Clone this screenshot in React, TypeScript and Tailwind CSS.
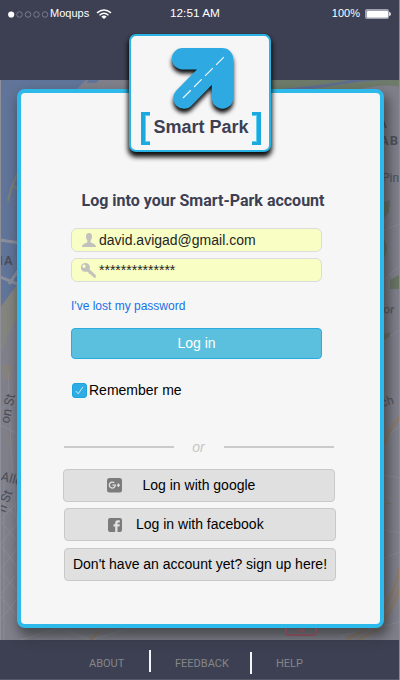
import React from "react";

const arial = "font-['Liberation_Sans',Arial,sans-serif]";
const roboto = "font-[Roboto,sans-serif]";

function MapBackdrop() {
  return (
    <svg className="absolute left-0 top-[80px] h-[560px] w-[400px]" viewBox="0 80 400 560">
      <rect x="0" y="80" width="400" height="560" fill="#7f808b" />
      <path d="M0 80H86L60 105L40 220L16 286L0 308Z" fill="#61759a" />
      <path d="M88 80h11l-3 3h-9z" fill="#61759a" />
      <path d="M200 80H400V87Q380 82 340 95H200Z" fill="#6e7b6a" />
      <path d="M270 94C320 90 345 81 386 80H350C330 85 300 87 270 90Z" fill="#5d6c91" />
      <path d="M8 201Q12 182 21 168M13 186l6 4" fill="none" stroke="#7d8178" strokeWidth="2" />
      <path d="M0 240L20 243M0 277L20 285M9 284L20 268" stroke="#8b8f9d" strokeWidth="3" fill="none" />
      <path d="M0 308L17 285V318L7 336L3 350H0Z" fill="#85857f" />
      <path d="M2 365h9v15h-8zM5 430q7 10 4 18" fill="#88827d" />
      <g fill="none" stroke="#8a8b96" strokeWidth="1">
        <path d="M0 410L20 395M8 370L11 450L18 540M0 425L20 435M0 500L20 520L0 545L20 570L0 595L20 620M20 500L0 520L20 545L0 570L20 595L0 620M4 480V640" />
        <path d="M384 230L400 224M384 280L400 265M384 340L400 330M384 440L400 425M384 475L400 478M384 530L400 533M384 558L400 552" />
        <path d="M20 640L60 628L90 640L130 628M340 636L400 622" />
      </g>
      <path d="M384 446Q388 429 400 417M384 609Q394 594 400 567M384 619Q394 608 400 587M346 640L368 628M358 640L380 628M90 640L98 632" fill="none" stroke="#8b7b6b" strokeWidth="3" />
      <path d="M384 202l6-2-1 12-5 6zM384 240q6 8 0 18zM390 280l9-5v14h-9zM384 334l6-2v5l-6 3z" fill="#687565" />
      <path d="M386 503l6 1" stroke="#69845f" strokeWidth="1" />
      <g className={roboto} fill="#4e4f59" fontSize="13">
        <text x="-1" y="265" fontWeight="700" letterSpacing="1">IA</text>
        <text x="372" y="128" fontWeight="700" fontSize="12">TA</text>
        <text x="380" y="145" fontWeight="700" fontSize="13" letterSpacing="1">AB</text>
        <text x="382" y="182" fontSize="12">Pin</text>
        <text x="383" y="313" fontSize="12" transform="rotate(5 383 313)">or</text>
        <text x="382" y="407" fontSize="12" transform="rotate(-15 382 407)">ch</text>
        <text x="9" y="424" transform="rotate(-78 9 424)">on St</text>
        <text x="0" y="480" transform="rotate(16 0 480)">Alle</text>
        <text x="5" y="513" transform="rotate(-70 5 513)">n St</text>
      </g>
    </svg>
  );
}

function Wifi() {
  return (
    <svg className="ml-[7px] h-[10px] w-4" viewBox="0 0 16 10" fill="none" stroke="#fff" strokeWidth="1.5">
      <path d="M1 3.9Q8-2 15 3.9M3.5 6.2Q8 2.4 12.5 6.2" />
      <path d="M5.3 7.7Q8 5.5 10.7 7.7L8 10Z" fill="#fff" stroke="none" />
    </svg>
  );
}

function StatusBar() {
  return (
    <header className="h-[80px] bg-[#3c4052] text-[11px] text-white">
      <div className="flex h-7 items-center pl-2 pr-[9px]">
        <div className="flex w-[162px] items-center">
          <svg className="h-[7px] w-[41px]" viewBox="0 0 41 7">
            <circle cx="3.2" cy="3.5" r="3.1" fill="#fff" />
            {[11.5, 20, 28.5, 37].map((x) => (
              <circle key={x} cx={x} cy="3.5" r="2.8" fill="none" stroke="#85869a" strokeWidth=".8" />
            ))}
          </svg>
          <span className="-mt-px ml-px">Moqups</span>
          <Wifi />
        </div>
        <span className="whitespace-nowrap text-[11.8px]">12:51 AM</span>
        <div className="flex flex-1 items-center justify-end">
          <span className="-mt-px">100%</span>
          <svg className="ml-[5px] h-[10px] w-[26px]" viewBox="0 0 26 10">
            <rect width="24" height="10" rx="2" fill="#a0a1ae" />
            <path d="M24 3q2 0 2 2t-2 2z" fill="#ddd" />
            <rect x="2" y="2" width="21" height="6.5" rx="1" fill="#fff" />
          </svg>
        </div>
      </div>
    </header>
  );
}

function Bracket({ flip }: { flip?: boolean }) {
  return (
    <svg className={flip ? "h-[33px] w-[9px] -scale-x-100" : "h-[33px] w-[9px]"} viewBox="0 0 9 33">
      <path d="M0 0H9V4H5V29H9V33H0Z" fill="#5fd0ee" />
      <path d="M0 0H9V3H4V30H9V33H0Z" fill="#1ba9df" />
    </svg>
  );
}

function LogoCard() {
  return (
    <div className="absolute left-[129px] top-[34px] h-[118px] w-[142px] rounded-[7px] border-2 border-[#29b2e2] bg-[#f6f6f6] shadow-[0_4px_5px_1px_rgba(0,0,0,0.95)]">
      <svg className="block h-[76px] w-full overflow-visible" viewBox="131 36 138 76">
        <g className="drop-shadow-[0px_4px_2px_rgba(0,0,0,0.95)]" fill="none" stroke="#2ea9e1" strokeWidth="21.4" strokeLinecap="round" strokeLinejoin="round">
          <path d="M182.5 58.8H222.5V98M184 98L222.5 58.8" />
          <path d="M205 72L222 62V80Z" fill="#2ea9e1" strokeWidth="2" />
        </g>
        <path d="M183 98L225 56" stroke="#f4fbff" strokeWidth="1.2" strokeDasharray="11 4.6" fill="none" />
      </svg>
      <div className="flex h-[33px] items-center justify-between pl-[10px] pr-[8px]">
        <Bracket />
        <span className="-mt-[3px] text-[18px] font-bold leading-none text-[#3c4052]">Smart Park</span>
        <Bracket flip />
      </div>
    </div>
  );
}

function UserIcon() {
  return (
    <svg className="h-[14px] w-[14px]" viewBox="0 0 14 14" fill="#c1c1bd">
      <path d="M7 0C4.7 0 3.8 1.7 4 4C4.1 5.8 4.9 7 5.4 7.8V9.2C4.5 10.3 0 10.4 0 14H14C14 10.4 9.5 10.3 8.6 9.2V7.8C9.1 7 9.9 5.8 10 4C10.2 1.7 9.3 0 7 0Z" />
    </svg>
  );
}

function KeyIcon() {
  return (
    <svg className="h-[15px] w-[15px]" viewBox="0 0 15 15">
      <path fillRule="evenodd" fill="#c1c1bd" d="M4.5 0A4.4 4.4 0 1 0 5.8 8.5L7.5 9.5L8.1 11L9.8 11.2L10.4 12.5L11.8 13.2L12.6 14.8H14.8V12.3L8.5 6.3A4.4 4.4 0 0 0 4.5 0ZM3.1 1.6A1.7 1.7 0 1 1 3 5A1.7 1.7 0 0 1 3.1 1.6Z" />
    </svg>
  );
}

function GoogleIcon() {
  return (
    <svg className="h-[15px] w-[15px]" viewBox="0 0 15 15" fill="none">
      <rect width="15" height="14.5" rx="2.5" fill="#7b7b7b" />
      <path d="M7.3 4.8A3 3 0 1 0 8.3 7.2H5.4M9.8 7.2H13.1M11.45 5.5V8.9" stroke="#e1e1e1" strokeWidth="1.3" />
    </svg>
  );
}

function FacebookIcon() {
  return (
    <svg className="h-[14px] w-[14px]" viewBox="0 0 14 14">
      <rect width="14" height="14" rx="2" fill="#7b7b7b" />
      <path d="M7.2 14V8.4H5.5V6.2H7.2V4.8Q7.2 2.2 9.8 2.2H11.8V4.4H10.3Q9.5 4.4 9.5 5.2V6.2H11.8L11.5 8.4H9.5V14Z" fill="#e1e1e1" />
    </svg>
  );
}

const providerButton = "flex h-[33px] w-[272px] items-center rounded border border-[#c9c9c9] bg-[#e0e0e0] text-[14px] text-black";
const field = "flex h-6 w-[251px] rounded-md border border-[#dcdcdc] bg-[#f8fec4] text-[14px] text-[#252525]";

function LoginCard() {
  return (
    <main className="relative ml-[17px] mt-[9px] h-[539px] w-[367px] rounded-lg border-4 border-[#2dbaea] bg-[#f6f6f6] pt-[97px] shadow-[3px_7px_12px_2px_rgba(40,40,40,0.6)]">
      <h1 className={`pl-[5px] text-center text-base font-bold leading-[22px] text-[#3c4052] ${roboto}`}>
        Log into your Smart-Park account
      </h1>
      <div className="ml-[50px] mt-4 flex flex-col items-start">
        <div className={`${field} items-center pl-[10px]`}>
          <UserIcon />
          <span className="ml-[3px]">david.avigad@gmail.com</span>
        </div>
        <div className={`${field} mt-1.5 items-center pl-[9px]`}>
          <KeyIcon />
          <span className="ml-[3px]">**************</span>
        </div>
        <a className="mt-4 text-[12px] leading-4 text-[#1673e6]">I've lost my password</a>
        <button className="mt-[14px] h-[31px] w-[251px] rounded border border-[#29abe2] bg-[#5bc0de] text-[14px] text-white">
          Log in
        </button>
        <label className="ml-px mt-[22px] flex h-[18px] items-center text-[14px] text-black">
          <span className="flex size-[15px] items-center justify-center rounded-[3px] border border-[#1ba5dd] bg-[#2eace3]">
            <svg className="size-[9px]" viewBox="0 0 9 9" fill="none" stroke="#c8edfc" strokeWidth="1">
              <path d="M.8 5L3.2 7.8L8 .8" />
            </svg>
          </span>
          <span className="ml-[2px]">Remember me</span>
        </label>
      </div>
      <div className="ml-[43px] mt-[39px] flex h-[18px] w-[270px] items-center justify-between">
        <span className="h-[2px] w-[110px] bg-[#cacaca]" />
        <span className="-ml-px text-[14px] italic text-[#c7c7c7]">or</span>
        <span className="h-[2px] w-[110px] bg-[#cacaca]" />
      </div>
      <div className="ml-[42px] mt-[13px] flex flex-col">
        <button className={`${providerButton} pl-[43px]`}>
          <GoogleIcon />
          <span className="ml-[20.5px]">Log in with google</span>
        </button>
        <button className={`${providerButton} ml-px mt-1.5 pl-[43px]`}>
          <FacebookIcon />
          <span className="ml-[14px]">Log in with facebook</span>
        </button>
        <button className={`${providerButton} ml-px mt-[7px] justify-center`}>
          Don't have an account yet? sign up here!
        </button>
      </div>
    </main>
  );
}

function TransitMark() {
  return (
    <svg className="absolute left-[285px] top-[628px] h-2 w-8" viewBox="0 0 32 8" fill="none" stroke="#794754" strokeWidth="2">
      <path d="M1 0V4Q1 7 4 7H28Q31 7 31 4V0M12 3l8-1" />
    </svg>
  );
}

function Footer() {
  return (
    <footer className={`mt-3 flex h-10 items-center border-b border-[#555866] pl-[89px] pt-[10px] text-[11px] text-[#858688] ${roboto}`}>
      <span className="w-[60px]">ABOUT</span>
      <span className="-mt-[7px] h-[22px] w-[2px] bg-[#f5f5f5]" />
      <span className="ml-6 w-[75px]">FEEDBACK</span>
      <span className="-mt-[3px] h-[22px] w-[2px] bg-[#f5f5f5]" />
      <span className="ml-6">HELP</span>
    </footer>
  );
}

export default function App() {
  return (
    <div className={`relative isolate h-[680px] w-[400px] overflow-hidden bg-[#3c4052] ${arial}`}>
      <MapBackdrop />
      <StatusBar />
      <div className="relative z-10">
        <LoginCard />
      </div>
      <Footer />
      <div className="absolute inset-y-0 right-0 z-20 w-px bg-[#27b1df]" />
      <div className="absolute bottom-10 left-0 top-[80px] w-px bg-[#8e8f98]" />
      <div className="absolute inset-0 z-10 pointer-events-none">
        <TransitMark />
        <LogoCard />
      </div>
    </div>
  );
}
